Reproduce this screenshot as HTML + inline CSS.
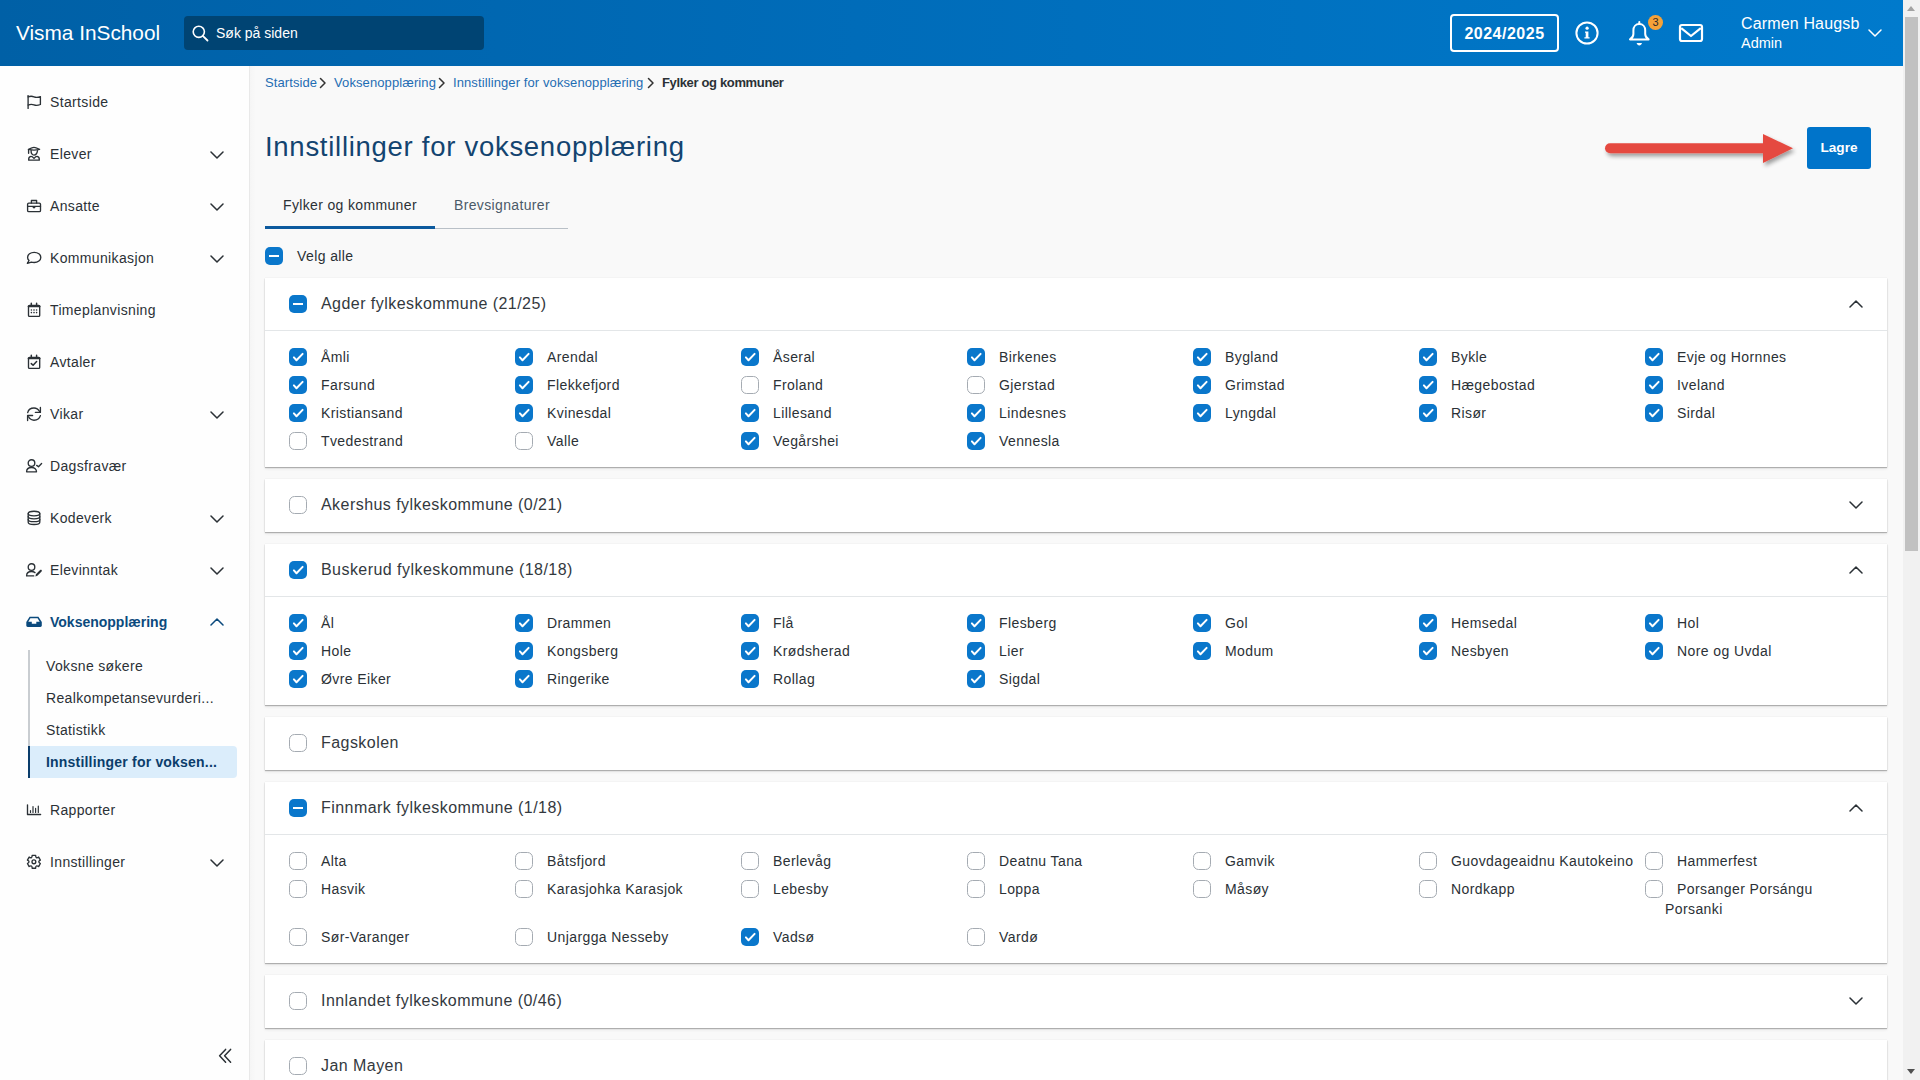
<!DOCTYPE html>
<html><head><meta charset="utf-8">
<style>
*{box-sizing:border-box;margin:0;padding:0}
html,body{width:1920px;height:1080px;overflow:hidden;background:#f9f9f9;font-family:"Liberation Sans",sans-serif;color:#2b3136}
#hdr{position:absolute;left:0;top:0;width:1903px;height:66px;background:linear-gradient(90deg,#0060a6 0%,#006cb9 45%,#007acc 100%)}
#brand{position:absolute;left:16px;top:20px;font-size:20.8px;color:#fff;line-height:26px;white-space:nowrap}
#search{position:absolute;left:184px;top:16px;width:300px;height:34px;background:#004473;border-radius:4px}
#search .t{position:absolute;left:32px;top:8px;font-size:14px;color:#fff;line-height:18px;white-space:nowrap}
#search svg{position:absolute;left:8px;top:9px}
#year{position:absolute;left:1450px;top:14px;width:109px;height:38px;border:2px solid #fff;border-radius:4px;color:#fff;font-weight:700;font-size:16px;letter-spacing:.5px;text-align:center;line-height:36px}
#user{position:absolute;left:1741px;top:14px;color:#fff;white-space:nowrap}
#user .n{font-size:16px;line-height:20px;letter-spacing:.15px}
#user .r{font-size:14.5px;line-height:19px}
#badge{position:absolute;left:1648px;top:15px;width:15px;height:15px;border-radius:50%;background:#f5a238;color:#2b2b2b;font-size:11px;line-height:15px;text-align:center}
#sb{position:absolute;left:0;top:66px;width:250px;height:1014px;background:#fefefe;border-right:1px solid #e9e9e9}
#sbsh{position:absolute;left:250px;top:66px;width:6px;height:1014px;background:linear-gradient(90deg,rgba(0,0,0,.015),rgba(0,0,0,0))}
#scroll{position:absolute;left:1903px;top:0;width:17px;height:1080px;background:#f1f1f1}
#thumb{position:absolute;left:1905px;top:17px;width:13px;height:534px;background:#c1c1c1}
.sarr{position:absolute;left:1907px;width:0;height:0;border-left:4.5px solid transparent;border-right:4.5px solid transparent}
.ic{position:absolute;left:22px}
.chev{position:absolute}
.sl{position:absolute;left:50px;font-size:14px;letter-spacing:.35px;line-height:20px;white-space:nowrap;color:#2b3136}
.sl.act{font-weight:700;letter-spacing:0;color:#0b4a7d}
#subline{position:absolute;left:28px;top:650px;width:2px;height:96px;background:#c9cdd1}
#subact{position:absolute;left:28px;top:746px;width:209px;height:32px;background:#dbedfb;border-left:2px solid #0b3d6b;border-radius:0 4px 4px 0}
.sub{position:absolute;left:46px;font-size:14px;letter-spacing:.35px;line-height:20px;white-space:nowrap;color:#2b3136}
.sub.act{font-weight:700;letter-spacing:.2px;color:#0b3d6b}
#bc{position:absolute;left:265px;top:74px;font-size:13px;line-height:18px;white-space:nowrap;color:#1f6db3;letter-spacing:.1px}
#bc span{position:absolute;top:0}
#title{position:absolute;left:265px;top:129px;font-size:27.5px;line-height:36px;color:#134470;white-space:nowrap;letter-spacing:.72px}
#lagre{position:absolute;left:1807px;top:127px;width:64px;height:42px;background:#0074ca;border-radius:3px;color:#fff;font-weight:700;font-size:13.6px;line-height:42px;text-align:center}
.tab{position:absolute;top:195px;font-size:14px;letter-spacing:.35px;line-height:20px;white-space:nowrap}
#tabline{position:absolute;left:435px;top:228px;width:133px;height:1px;background:#b9c0c7}
#tabact{position:absolute;left:265px;top:226px;width:170px;height:3px;background:#0c5a9e}
.cb{position:absolute;width:18px;height:18px;border-radius:5px}
.cb svg{position:absolute;left:0;top:0}
.cb.on{background:#0a77cb}
.cb.on i{position:absolute;left:4px;top:7.75px;width:10px;height:2.5px;background:#fff}
.cb.off{border:1px solid #a5abb2;background:#fff;border-radius:5.5px}
.lbl{position:absolute;font-size:14px;letter-spacing:.4px;line-height:20px;white-space:nowrap;color:#2b3136}
.wrap2{position:relative;left:-12px}
.panel{position:absolute;left:265px;width:1622px;background:#fff;box-shadow:0 1px 1px rgba(0,0,0,.24),0 2px 3px rgba(0,0,0,.07),0 0 1px rgba(0,0,0,.12)}
.ptitle{position:absolute;left:321px;font-size:16px;letter-spacing:.45px;line-height:22px;white-space:nowrap;color:#33393e}
.sep{position:absolute;left:265px;width:1622px;height:1px;background:#e3e6e8}
</style></head>
<body>
<div id="hdr">
  <div id="brand">Visma InSchool</div>
  <div id="search">
    <svg width="17" height="17" viewBox="0 0 17 17"><circle cx="6.8" cy="6.8" r="5.6" fill="none" stroke="#fff" stroke-width="1.6"/><line x1="10.8" y1="10.8" x2="15.5" y2="15.5" stroke="#fff" stroke-width="1.8" stroke-linecap="round"/></svg>
    <div class="t">Søk på siden</div>
  </div>
  <div id="year">2024/2025</div>
  
<svg style="position:absolute;left:1574px;top:20px" width="26" height="26" viewBox="0 0 26 26"><circle cx="13" cy="13" r="10.6" fill="none" stroke="#fff" stroke-width="2"/><circle cx="13.1" cy="8.2" r="1.6" fill="#fff"/><path d="M11 11.4H14.4V17.2H15.6V18.6H10.4V17.2H11.7V12.8H11Z" fill="#fff"/></svg>
<svg style="position:absolute;left:1626px;top:19px" width="28" height="30" viewBox="0 0 28 30"><path d="M13.3 5C9.7 5 7.4 7.7 7.4 11.3V15C7.4 17.4 5.8 19.2 4 20.4H22.6C20.8 19.2 19.2 17.4 19.2 15V11.3C19.2 7.7 16.9 5 13.3 5Z" fill="none" stroke="#fff" stroke-width="2" stroke-linejoin="round"/><path d="M13.3 3V5" stroke="#fff" stroke-width="2" stroke-linecap="round"/><path d="M10.6 24H16C15.6 25.6 14.6 26.5 13.3 26.5S11 25.6 10.6 24Z" fill="#fff"/></svg>
<div id="badge">3</div>
<svg style="position:absolute;left:1676px;top:21px" width="30" height="24" viewBox="0 0 30 24"><rect x="4" y="4" width="22" height="16" rx="2" fill="none" stroke="#fff" stroke-width="2.2"/><path d="M5.2 7.2L15 15L24.8 7.2" fill="none" stroke="#fff" stroke-width="2.2" stroke-linejoin="round"/></svg>
<svg class="chev" style="left:1868px;top:29px" width="14" height="8" viewBox="0 0 14 8"><path d="M1 1L7 7L13 1" fill="none" stroke="#fff" stroke-width="1.5" stroke-linecap="round" stroke-linejoin="round"/></svg>
  <div id="user"><div class="n">Carmen Haugsb</div><div class="r">Admin</div></div>
</div>
<div id="sb">
</div>
<div id="sbsh"></div>
<svg class="ic" style="top:91px" width="24" height="22" viewBox="0 0 24 22" fill="none" stroke="#2b3136" stroke-width="1.35" stroke-linecap="round" stroke-linejoin="round"><path d="M6.1 17.4V4.6"/><path d="M6.1 5.9C8.4 5 10 5 12 5.9S16 6.6 18.4 5.6V13.5C16 14.5 14 14.7 12 13.9S8.4 13.1 6.1 14.1"/></svg><div class="sl" style="top:92px">Startside</div><svg class="ic" style="top:144px" width="24" height="22" viewBox="0 0 24 22" fill="none" stroke="#2b3136" stroke-width="1.35" stroke-linecap="round" stroke-linejoin="round"><path d="M6.5 5.3C9 4.1 10.5 3.4 12 3.4S15 4.1 17.6 5.3C15 5.9 13.5 6.1 12 6.1S9 5.9 6.5 5.3Z"/><path d="M6.6 5.6V9.2"/><path d="M9.1 6.5C8.9 9.6 10.3 11.1 12 11.1S15.1 9.6 15.5 6.7"/><path d="M6.7 16.1C6.5 14 7.5 12.6 8.9 12.4C10 12.3 11.1 13.3 12 14.4C12.9 13.3 14 12.3 15.1 12.4C16.5 12.6 17.5 14 17.3 16.1Z"/></svg><div class="sl" style="top:144px">Elever</div><svg class="chev" style="left:210px;top:151px" width="14" height="8" viewBox="0 0 14 8"><path d="M1 1L7 7L13 1" fill="none" stroke="#2b3136" stroke-width="1.5" stroke-linecap="round" stroke-linejoin="round"/></svg><svg class="ic" style="top:196px" width="24" height="22" viewBox="0 0 24 22" fill="none" stroke="#2b3136" stroke-width="1.35" stroke-linecap="round" stroke-linejoin="round"><rect x="5.6" y="7.1" width="12.9" height="8.5" rx="1.2"/><path d="M9.4 7.1V4.5H14.6V7.1"/><path d="M5.6 10.3H18.5"/><path d="M10.4 10.4H13.6C13.5 11.7 12.8 12.4 12 12.4S10.5 11.7 10.4 10.4Z" fill="#2b3136" stroke="none"/></svg><div class="sl" style="top:196px">Ansatte</div><svg class="chev" style="left:210px;top:203px" width="14" height="8" viewBox="0 0 14 8"><path d="M1 1L7 7L13 1" fill="none" stroke="#2b3136" stroke-width="1.5" stroke-linecap="round" stroke-linejoin="round"/></svg><svg class="ic" style="top:248px" width="24" height="22" viewBox="0 0 24 22" fill="none" stroke="#2b3136" stroke-width="1.35" stroke-linecap="round" stroke-linejoin="round"><path d="M9.4 14.1C10.2 14.4 11.2 14.5 12.2 14.5C15.9 14.5 18.8 12.2 18.8 9.4S15.9 4.3 12.2 4.3S5.6 6.6 5.6 9.4C5.6 10.6 6.1 11.6 7 12.5L5.4 15.4Z"/></svg><div class="sl" style="top:248px">Kommunikasjon</div><svg class="chev" style="left:210px;top:255px" width="14" height="8" viewBox="0 0 14 8"><path d="M1 1L7 7L13 1" fill="none" stroke="#2b3136" stroke-width="1.5" stroke-linecap="round" stroke-linejoin="round"/></svg><svg class="ic" style="top:300px" width="24" height="22" viewBox="0 0 24 22" fill="none" stroke="#2b3136" stroke-width="1.35" stroke-linecap="round" stroke-linejoin="round"><rect x="6.5" y="5.4" width="11.2" height="11" rx="1"/><path d="M6.5 6.3H17.7" stroke-width="1.8"/><path d="M9.3 3.3V5.3M14.6 3.3V5.3" stroke-width="1.5"/><g fill="#2b3136" stroke="none"><circle cx="9.4" cy="10" r=".8"/><circle cx="12" cy="10" r=".8"/><circle cx="14.6" cy="10" r=".8"/><circle cx="9.4" cy="12.6" r=".8"/><circle cx="12" cy="12.6" r=".8"/><circle cx="14.6" cy="12.6" r=".8"/></g></svg><div class="sl" style="top:300px">Timeplanvisning</div><svg class="ic" style="top:352px" width="24" height="22" viewBox="0 0 24 22" fill="none" stroke="#2b3136" stroke-width="1.35" stroke-linecap="round" stroke-linejoin="round"><rect x="6.5" y="5.4" width="11.2" height="11" rx="1"/><path d="M6.5 6.3H17.7" stroke-width="1.8"/><path d="M9.3 3.3V5.3M14.6 3.3V5.3" stroke-width="1.5"/><path d="M9.3 11.6L11.1 13.3L14.6 9.6" stroke-width="1.5"/></svg><div class="sl" style="top:352px">Avtaler</div><svg class="ic" style="top:404px" width="24" height="22" viewBox="0 0 24 22" fill="none" stroke="#2b3136" stroke-width="1.35" stroke-linecap="round" stroke-linejoin="round"><path d="M5.7 8.6C6.4 5.8 8.9 4 12 4C14.3 4 16.3 5.2 17.6 7.5"/><path d="M18.4 3.4V8.4H13.4"/><path d="M18.4 11.6C17.6 14.3 15.1 16.2 12 16.2C9.7 16.2 7.7 15 6.5 12.8"/><path d="M5.6 16.5V11.5H10.6"/></svg><div class="sl" style="top:404px">Vikar</div><svg class="chev" style="left:210px;top:411px" width="14" height="8" viewBox="0 0 14 8"><path d="M1 1L7 7L13 1" fill="none" stroke="#2b3136" stroke-width="1.5" stroke-linecap="round" stroke-linejoin="round"/></svg><svg class="ic" style="top:456px" width="24" height="22" viewBox="0 0 24 22" fill="none" stroke="#2b3136" stroke-width="1.35" stroke-linecap="round" stroke-linejoin="round"><circle cx="9.5" cy="7" r="3.3"/><path d="M4.6 15.8C4.6 13.1 6.8 11.5 9.5 11.5S14.5 13.1 14.5 15.8Z"/><path d="M14.7 9.4L16.5 10.8L19.6 7.5"/></svg><div class="sl" style="top:456px">Dagsfravær</div><svg class="ic" style="top:508px" width="24" height="22" viewBox="0 0 24 22" fill="none" stroke="#2b3136" stroke-width="1.35" stroke-linecap="round" stroke-linejoin="round"><ellipse cx="12" cy="5.6" rx="5.8" ry="2.3"/><path d="M6.2 5.6V14.2C6.2 15.5 8.8 16.5 12 16.5S17.8 15.5 17.8 14.2V5.6"/><path d="M6.2 8.6C6.2 9.9 8.8 10.8 12 10.8S17.8 9.9 17.8 8.6"/><path d="M6.2 11.4C6.2 12.7 8.8 13.6 12 13.6S17.8 12.7 17.8 11.4"/></svg><div class="sl" style="top:508px">Kodeverk</div><svg class="chev" style="left:210px;top:515px" width="14" height="8" viewBox="0 0 14 8"><path d="M1 1L7 7L13 1" fill="none" stroke="#2b3136" stroke-width="1.5" stroke-linecap="round" stroke-linejoin="round"/></svg><svg class="ic" style="top:560px" width="24" height="22" viewBox="0 0 24 22" fill="none" stroke="#2b3136" stroke-width="1.35" stroke-linecap="round" stroke-linejoin="round"><circle cx="9.5" cy="7" r="3.3"/><path d="M11.7 15.9H4.6C4.6 13.1 6.8 11.5 9.5 11.5C10.9 11.5 12.1 11.9 13 12.6"/><path d="M13.4 16.4L13.9 14.3L18.1 10C18.5 9.6 19.2 9.6 19.6 10C20 10.4 20 11 19.6 11.4L15.4 15.8Z" fill="#2b3136" stroke="none"/></svg><div class="sl" style="top:560px">Elevinntak</div><svg class="chev" style="left:210px;top:567px" width="14" height="8" viewBox="0 0 14 8"><path d="M1 1L7 7L13 1" fill="none" stroke="#2b3136" stroke-width="1.5" stroke-linecap="round" stroke-linejoin="round"/></svg><svg class="ic" style="top:800px" width="24" height="22" viewBox="0 0 24 22" fill="none" stroke="#2b3136" stroke-width="1.35" stroke-linecap="round" stroke-linejoin="round"><path d="M5.5 4.8V14.5H18.6"/><path d="M8.5 10.6V12.5M11 6.6V12.5M13.6 8.4V12.5M16.3 6.1V12.5" stroke-width="1.2"/></svg><div class="sl" style="top:800px">Rapporter</div><svg class="ic" style="top:852px" width="24" height="22" viewBox="0 0 24 22" fill="none" stroke="#2b3136" stroke-width="1.35" stroke-linecap="round" stroke-linejoin="round"><path d="M10.17 3.33L13.63 3.33Q13.55 6.94 16.64 5.06L18.37 8.07Q15.20 9.80 18.37 11.53L16.64 14.54Q13.55 12.66 13.63 16.27L10.17 16.27Q10.25 12.66 7.16 14.54L5.43 11.53Q8.60 9.80 5.43 8.07L7.16 5.06Q10.25 6.94 10.17 3.33Z"/><circle cx="11.9" cy="9.8" r="1.9"/></svg><div class="sl" style="top:852px">Innstillinger</div><svg class="chev" style="left:210px;top:859px" width="14" height="8" viewBox="0 0 14 8"><path d="M1 1L7 7L13 1" fill="none" stroke="#2b3136" stroke-width="1.5" stroke-linecap="round" stroke-linejoin="round"/></svg><svg class="ic" style="top:612px" width="24" height="22" viewBox="0 0 24 22" fill="none" stroke="#2b3136" stroke-width="1.35" stroke-linecap="round" stroke-linejoin="round"><path d="M7.6 4.8H16.4L19.8 10V13.6C19.8 14.4 19.2 15 18.4 15H5.7C4.9 15 4.3 14.4 4.3 13.6V10Z" fill="#0b4a7d" stroke="none"/><path d="M8.4 6.2H15.6L17.7 9.8H14.3V11.8H9.8V9.8H6.3Z" fill="#fff" stroke="none"/></svg><div class="sl act" style="top:612px">Voksenopplæring</div><svg class="chev" style="left:210px;top:618px" width="14" height="8" viewBox="0 0 14 8"><path d="M1 7L7 1L13 7" fill="none" stroke="#0b4a7d" stroke-width="1.5" stroke-linecap="round" stroke-linejoin="round"/></svg><div id="subline"></div><div id="subact"></div><div class="sub" style="top:656px">Voksne søkere</div><div class="sub" style="top:688px">Realkompetansevurderi...</div><div class="sub" style="top:720px">Statistikk</div><div class="sub act" style="top:752px">Innstillinger for voksen...</div><svg style="position:absolute;left:214px;top:1045px" width="22" height="22" viewBox="0 0 22 22"><path d="M11.6 4.4L5.6 10.8L11.6 17.2M16.6 4.4L10.6 10.8L16.6 17.2" fill="none" stroke="#2b3136" stroke-width="1.5" stroke-linecap="round" stroke-linejoin="round"/></svg>
<div id="bc"><span style="left:0">Startside</span><span style="left:69px">Voksenopplæring</span><span style="left:188px">Innstillinger for voksenopplæring</span><span style="left:397px;color:#2b3136;font-weight:700;letter-spacing:-.35px">Fylker og kommuner</span></div>
<svg style="position:absolute;left:318px;top:77px" width="340" height="12" viewBox="0 0 340 12"><path d="M2.5 1.5L7 6L2.5 10.5M121.5 1.5L126 6L121.5 10.5M330.5 1.5L335 6L330.5 10.5" fill="none" stroke="#333" stroke-width="1.5" stroke-linecap="round" stroke-linejoin="round"/></svg>
<div id="title">Innstillinger for voksenopplæring</div>
<svg style="position:absolute;left:1598px;top:128px" width="200" height="42" viewBox="0 0 200 42"><defs><filter id="sh" x="-10%" y="-50%" width="120%" height="200%"><feGaussianBlur in="SourceAlpha" stdDeviation="2.2"/><feOffset dx="1.5" dy="2.5"/><feComponentTransfer><feFuncA type="linear" slope=".38"/></feComponentTransfer><feMerge><feMergeNode/><feMergeNode in="SourceGraphic"/></feMerge></filter></defs><g filter="url(#sh)"><path d="M12 20.3H170" stroke="#e54a40" stroke-width="10" stroke-linecap="round"/><path d="M165 6L195 20.3L165 35Z" fill="#e54a40"/></g></svg>
<div id="lagre">Lagre</div>
<div class="tab" style="left:283px;color:#2b3136">Fylker og kommuner</div>
<div class="tab" style="left:454px;color:#4b5a68">Brevsignaturer</div>
<div id="tabline"></div><div id="tabact"></div>
<div class="cb on" style="left:265px;top:247px"><i></i></div><div class="lbl" style="left:297px;top:246px">Velg alle</div><div class="panel" style="top:278px;height:189px"></div><div class="cb on" style="left:289px;top:295px"><i></i></div><div class="ptitle" style="top:293px">Agder fylkeskommune (21/25)</div><svg class="chev" style="left:1849px;top:300px" width="14" height="8" viewBox="0 0 14 8"><path d="M1 7L7 1L13 7" fill="none" stroke="#2b3136" stroke-width="1.5" stroke-linecap="round" stroke-linejoin="round"/></svg><div class="sep" style="top:330px"></div><div class="cb on" style="left:289px;top:348px"><svg width="18" height="18" viewBox="0 0 18 18"><path d="M4.9 9.4L7.5 12.2L13.6 5.9" fill="none" stroke="#fff" stroke-width="2" stroke-linecap="round" stroke-linejoin="round"/></svg></div><div class="lbl" style="left:321px;top:347px">Åmli</div><div class="cb on" style="left:515px;top:348px"><svg width="18" height="18" viewBox="0 0 18 18"><path d="M4.9 9.4L7.5 12.2L13.6 5.9" fill="none" stroke="#fff" stroke-width="2" stroke-linecap="round" stroke-linejoin="round"/></svg></div><div class="lbl" style="left:547px;top:347px">Arendal</div><div class="cb on" style="left:741px;top:348px"><svg width="18" height="18" viewBox="0 0 18 18"><path d="M4.9 9.4L7.5 12.2L13.6 5.9" fill="none" stroke="#fff" stroke-width="2" stroke-linecap="round" stroke-linejoin="round"/></svg></div><div class="lbl" style="left:773px;top:347px">Åseral</div><div class="cb on" style="left:967px;top:348px"><svg width="18" height="18" viewBox="0 0 18 18"><path d="M4.9 9.4L7.5 12.2L13.6 5.9" fill="none" stroke="#fff" stroke-width="2" stroke-linecap="round" stroke-linejoin="round"/></svg></div><div class="lbl" style="left:999px;top:347px">Birkenes</div><div class="cb on" style="left:1193px;top:348px"><svg width="18" height="18" viewBox="0 0 18 18"><path d="M4.9 9.4L7.5 12.2L13.6 5.9" fill="none" stroke="#fff" stroke-width="2" stroke-linecap="round" stroke-linejoin="round"/></svg></div><div class="lbl" style="left:1225px;top:347px">Bygland</div><div class="cb on" style="left:1419px;top:348px"><svg width="18" height="18" viewBox="0 0 18 18"><path d="M4.9 9.4L7.5 12.2L13.6 5.9" fill="none" stroke="#fff" stroke-width="2" stroke-linecap="round" stroke-linejoin="round"/></svg></div><div class="lbl" style="left:1451px;top:347px">Bykle</div><div class="cb on" style="left:1645px;top:348px"><svg width="18" height="18" viewBox="0 0 18 18"><path d="M4.9 9.4L7.5 12.2L13.6 5.9" fill="none" stroke="#fff" stroke-width="2" stroke-linecap="round" stroke-linejoin="round"/></svg></div><div class="lbl" style="left:1677px;top:347px">Evje og Hornnes</div><div class="cb on" style="left:289px;top:376px"><svg width="18" height="18" viewBox="0 0 18 18"><path d="M4.9 9.4L7.5 12.2L13.6 5.9" fill="none" stroke="#fff" stroke-width="2" stroke-linecap="round" stroke-linejoin="round"/></svg></div><div class="lbl" style="left:321px;top:375px">Farsund</div><div class="cb on" style="left:515px;top:376px"><svg width="18" height="18" viewBox="0 0 18 18"><path d="M4.9 9.4L7.5 12.2L13.6 5.9" fill="none" stroke="#fff" stroke-width="2" stroke-linecap="round" stroke-linejoin="round"/></svg></div><div class="lbl" style="left:547px;top:375px">Flekkefjord</div><div class="cb off" style="left:741px;top:376px"></div><div class="lbl" style="left:773px;top:375px">Froland</div><div class="cb off" style="left:967px;top:376px"></div><div class="lbl" style="left:999px;top:375px">Gjerstad</div><div class="cb on" style="left:1193px;top:376px"><svg width="18" height="18" viewBox="0 0 18 18"><path d="M4.9 9.4L7.5 12.2L13.6 5.9" fill="none" stroke="#fff" stroke-width="2" stroke-linecap="round" stroke-linejoin="round"/></svg></div><div class="lbl" style="left:1225px;top:375px">Grimstad</div><div class="cb on" style="left:1419px;top:376px"><svg width="18" height="18" viewBox="0 0 18 18"><path d="M4.9 9.4L7.5 12.2L13.6 5.9" fill="none" stroke="#fff" stroke-width="2" stroke-linecap="round" stroke-linejoin="round"/></svg></div><div class="lbl" style="left:1451px;top:375px">Hægebostad</div><div class="cb on" style="left:1645px;top:376px"><svg width="18" height="18" viewBox="0 0 18 18"><path d="M4.9 9.4L7.5 12.2L13.6 5.9" fill="none" stroke="#fff" stroke-width="2" stroke-linecap="round" stroke-linejoin="round"/></svg></div><div class="lbl" style="left:1677px;top:375px">Iveland</div><div class="cb on" style="left:289px;top:404px"><svg width="18" height="18" viewBox="0 0 18 18"><path d="M4.9 9.4L7.5 12.2L13.6 5.9" fill="none" stroke="#fff" stroke-width="2" stroke-linecap="round" stroke-linejoin="round"/></svg></div><div class="lbl" style="left:321px;top:403px">Kristiansand</div><div class="cb on" style="left:515px;top:404px"><svg width="18" height="18" viewBox="0 0 18 18"><path d="M4.9 9.4L7.5 12.2L13.6 5.9" fill="none" stroke="#fff" stroke-width="2" stroke-linecap="round" stroke-linejoin="round"/></svg></div><div class="lbl" style="left:547px;top:403px">Kvinesdal</div><div class="cb on" style="left:741px;top:404px"><svg width="18" height="18" viewBox="0 0 18 18"><path d="M4.9 9.4L7.5 12.2L13.6 5.9" fill="none" stroke="#fff" stroke-width="2" stroke-linecap="round" stroke-linejoin="round"/></svg></div><div class="lbl" style="left:773px;top:403px">Lillesand</div><div class="cb on" style="left:967px;top:404px"><svg width="18" height="18" viewBox="0 0 18 18"><path d="M4.9 9.4L7.5 12.2L13.6 5.9" fill="none" stroke="#fff" stroke-width="2" stroke-linecap="round" stroke-linejoin="round"/></svg></div><div class="lbl" style="left:999px;top:403px">Lindesnes</div><div class="cb on" style="left:1193px;top:404px"><svg width="18" height="18" viewBox="0 0 18 18"><path d="M4.9 9.4L7.5 12.2L13.6 5.9" fill="none" stroke="#fff" stroke-width="2" stroke-linecap="round" stroke-linejoin="round"/></svg></div><div class="lbl" style="left:1225px;top:403px">Lyngdal</div><div class="cb on" style="left:1419px;top:404px"><svg width="18" height="18" viewBox="0 0 18 18"><path d="M4.9 9.4L7.5 12.2L13.6 5.9" fill="none" stroke="#fff" stroke-width="2" stroke-linecap="round" stroke-linejoin="round"/></svg></div><div class="lbl" style="left:1451px;top:403px">Risør</div><div class="cb on" style="left:1645px;top:404px"><svg width="18" height="18" viewBox="0 0 18 18"><path d="M4.9 9.4L7.5 12.2L13.6 5.9" fill="none" stroke="#fff" stroke-width="2" stroke-linecap="round" stroke-linejoin="round"/></svg></div><div class="lbl" style="left:1677px;top:403px">Sirdal</div><div class="cb off" style="left:289px;top:432px"></div><div class="lbl" style="left:321px;top:431px">Tvedestrand</div><div class="cb off" style="left:515px;top:432px"></div><div class="lbl" style="left:547px;top:431px">Valle</div><div class="cb on" style="left:741px;top:432px"><svg width="18" height="18" viewBox="0 0 18 18"><path d="M4.9 9.4L7.5 12.2L13.6 5.9" fill="none" stroke="#fff" stroke-width="2" stroke-linecap="round" stroke-linejoin="round"/></svg></div><div class="lbl" style="left:773px;top:431px">Vegårshei</div><div class="cb on" style="left:967px;top:432px"><svg width="18" height="18" viewBox="0 0 18 18"><path d="M4.9 9.4L7.5 12.2L13.6 5.9" fill="none" stroke="#fff" stroke-width="2" stroke-linecap="round" stroke-linejoin="round"/></svg></div><div class="lbl" style="left:999px;top:431px">Vennesla</div><div class="panel" style="top:479px;height:53px"></div><div class="cb off" style="left:289px;top:496px"></div><div class="ptitle" style="top:494px">Akershus fylkeskommune (0/21)</div><svg class="chev" style="left:1849px;top:501px" width="14" height="8" viewBox="0 0 14 8"><path d="M1 1L7 7L13 1" fill="none" stroke="#2b3136" stroke-width="1.5" stroke-linecap="round" stroke-linejoin="round"/></svg><div class="panel" style="top:544px;height:161px"></div><div class="cb on" style="left:289px;top:561px"><svg width="18" height="18" viewBox="0 0 18 18"><path d="M4.9 9.4L7.5 12.2L13.6 5.9" fill="none" stroke="#fff" stroke-width="2" stroke-linecap="round" stroke-linejoin="round"/></svg></div><div class="ptitle" style="top:559px">Buskerud fylkeskommune (18/18)</div><svg class="chev" style="left:1849px;top:566px" width="14" height="8" viewBox="0 0 14 8"><path d="M1 7L7 1L13 7" fill="none" stroke="#2b3136" stroke-width="1.5" stroke-linecap="round" stroke-linejoin="round"/></svg><div class="sep" style="top:596px"></div><div class="cb on" style="left:289px;top:614px"><svg width="18" height="18" viewBox="0 0 18 18"><path d="M4.9 9.4L7.5 12.2L13.6 5.9" fill="none" stroke="#fff" stroke-width="2" stroke-linecap="round" stroke-linejoin="round"/></svg></div><div class="lbl" style="left:321px;top:613px">Ål</div><div class="cb on" style="left:515px;top:614px"><svg width="18" height="18" viewBox="0 0 18 18"><path d="M4.9 9.4L7.5 12.2L13.6 5.9" fill="none" stroke="#fff" stroke-width="2" stroke-linecap="round" stroke-linejoin="round"/></svg></div><div class="lbl" style="left:547px;top:613px">Drammen</div><div class="cb on" style="left:741px;top:614px"><svg width="18" height="18" viewBox="0 0 18 18"><path d="M4.9 9.4L7.5 12.2L13.6 5.9" fill="none" stroke="#fff" stroke-width="2" stroke-linecap="round" stroke-linejoin="round"/></svg></div><div class="lbl" style="left:773px;top:613px">Flå</div><div class="cb on" style="left:967px;top:614px"><svg width="18" height="18" viewBox="0 0 18 18"><path d="M4.9 9.4L7.5 12.2L13.6 5.9" fill="none" stroke="#fff" stroke-width="2" stroke-linecap="round" stroke-linejoin="round"/></svg></div><div class="lbl" style="left:999px;top:613px">Flesberg</div><div class="cb on" style="left:1193px;top:614px"><svg width="18" height="18" viewBox="0 0 18 18"><path d="M4.9 9.4L7.5 12.2L13.6 5.9" fill="none" stroke="#fff" stroke-width="2" stroke-linecap="round" stroke-linejoin="round"/></svg></div><div class="lbl" style="left:1225px;top:613px">Gol</div><div class="cb on" style="left:1419px;top:614px"><svg width="18" height="18" viewBox="0 0 18 18"><path d="M4.9 9.4L7.5 12.2L13.6 5.9" fill="none" stroke="#fff" stroke-width="2" stroke-linecap="round" stroke-linejoin="round"/></svg></div><div class="lbl" style="left:1451px;top:613px">Hemsedal</div><div class="cb on" style="left:1645px;top:614px"><svg width="18" height="18" viewBox="0 0 18 18"><path d="M4.9 9.4L7.5 12.2L13.6 5.9" fill="none" stroke="#fff" stroke-width="2" stroke-linecap="round" stroke-linejoin="round"/></svg></div><div class="lbl" style="left:1677px;top:613px">Hol</div><div class="cb on" style="left:289px;top:642px"><svg width="18" height="18" viewBox="0 0 18 18"><path d="M4.9 9.4L7.5 12.2L13.6 5.9" fill="none" stroke="#fff" stroke-width="2" stroke-linecap="round" stroke-linejoin="round"/></svg></div><div class="lbl" style="left:321px;top:641px">Hole</div><div class="cb on" style="left:515px;top:642px"><svg width="18" height="18" viewBox="0 0 18 18"><path d="M4.9 9.4L7.5 12.2L13.6 5.9" fill="none" stroke="#fff" stroke-width="2" stroke-linecap="round" stroke-linejoin="round"/></svg></div><div class="lbl" style="left:547px;top:641px">Kongsberg</div><div class="cb on" style="left:741px;top:642px"><svg width="18" height="18" viewBox="0 0 18 18"><path d="M4.9 9.4L7.5 12.2L13.6 5.9" fill="none" stroke="#fff" stroke-width="2" stroke-linecap="round" stroke-linejoin="round"/></svg></div><div class="lbl" style="left:773px;top:641px">Krødsherad</div><div class="cb on" style="left:967px;top:642px"><svg width="18" height="18" viewBox="0 0 18 18"><path d="M4.9 9.4L7.5 12.2L13.6 5.9" fill="none" stroke="#fff" stroke-width="2" stroke-linecap="round" stroke-linejoin="round"/></svg></div><div class="lbl" style="left:999px;top:641px">Lier</div><div class="cb on" style="left:1193px;top:642px"><svg width="18" height="18" viewBox="0 0 18 18"><path d="M4.9 9.4L7.5 12.2L13.6 5.9" fill="none" stroke="#fff" stroke-width="2" stroke-linecap="round" stroke-linejoin="round"/></svg></div><div class="lbl" style="left:1225px;top:641px">Modum</div><div class="cb on" style="left:1419px;top:642px"><svg width="18" height="18" viewBox="0 0 18 18"><path d="M4.9 9.4L7.5 12.2L13.6 5.9" fill="none" stroke="#fff" stroke-width="2" stroke-linecap="round" stroke-linejoin="round"/></svg></div><div class="lbl" style="left:1451px;top:641px">Nesbyen</div><div class="cb on" style="left:1645px;top:642px"><svg width="18" height="18" viewBox="0 0 18 18"><path d="M4.9 9.4L7.5 12.2L13.6 5.9" fill="none" stroke="#fff" stroke-width="2" stroke-linecap="round" stroke-linejoin="round"/></svg></div><div class="lbl" style="left:1677px;top:641px">Nore og Uvdal</div><div class="cb on" style="left:289px;top:670px"><svg width="18" height="18" viewBox="0 0 18 18"><path d="M4.9 9.4L7.5 12.2L13.6 5.9" fill="none" stroke="#fff" stroke-width="2" stroke-linecap="round" stroke-linejoin="round"/></svg></div><div class="lbl" style="left:321px;top:669px">Øvre Eiker</div><div class="cb on" style="left:515px;top:670px"><svg width="18" height="18" viewBox="0 0 18 18"><path d="M4.9 9.4L7.5 12.2L13.6 5.9" fill="none" stroke="#fff" stroke-width="2" stroke-linecap="round" stroke-linejoin="round"/></svg></div><div class="lbl" style="left:547px;top:669px">Ringerike</div><div class="cb on" style="left:741px;top:670px"><svg width="18" height="18" viewBox="0 0 18 18"><path d="M4.9 9.4L7.5 12.2L13.6 5.9" fill="none" stroke="#fff" stroke-width="2" stroke-linecap="round" stroke-linejoin="round"/></svg></div><div class="lbl" style="left:773px;top:669px">Rollag</div><div class="cb on" style="left:967px;top:670px"><svg width="18" height="18" viewBox="0 0 18 18"><path d="M4.9 9.4L7.5 12.2L13.6 5.9" fill="none" stroke="#fff" stroke-width="2" stroke-linecap="round" stroke-linejoin="round"/></svg></div><div class="lbl" style="left:999px;top:669px">Sigdal</div><div class="panel" style="top:717px;height:53px"></div><div class="cb off" style="left:289px;top:734px"></div><div class="ptitle" style="top:732px">Fagskolen</div><div class="panel" style="top:782px;height:181px"></div><div class="cb on" style="left:289px;top:799px"><i></i></div><div class="ptitle" style="top:797px">Finnmark fylkeskommune (1/18)</div><svg class="chev" style="left:1849px;top:804px" width="14" height="8" viewBox="0 0 14 8"><path d="M1 7L7 1L13 7" fill="none" stroke="#2b3136" stroke-width="1.5" stroke-linecap="round" stroke-linejoin="round"/></svg><div class="sep" style="top:834px"></div><div class="cb off" style="left:289px;top:852px"></div><div class="lbl" style="left:321px;top:851px">Alta</div><div class="cb off" style="left:515px;top:852px"></div><div class="lbl" style="left:547px;top:851px">Båtsfjord</div><div class="cb off" style="left:741px;top:852px"></div><div class="lbl" style="left:773px;top:851px">Berlevåg</div><div class="cb off" style="left:967px;top:852px"></div><div class="lbl" style="left:999px;top:851px">Deatnu Tana</div><div class="cb off" style="left:1193px;top:852px"></div><div class="lbl" style="left:1225px;top:851px">Gamvik</div><div class="cb off" style="left:1419px;top:852px"></div><div class="lbl" style="left:1451px;top:851px">Guovdageaidnu Kautokeino</div><div class="cb off" style="left:1645px;top:852px"></div><div class="lbl" style="left:1677px;top:851px">Hammerfest</div><div class="cb off" style="left:289px;top:880px"></div><div class="lbl" style="left:321px;top:879px">Hasvik</div><div class="cb off" style="left:515px;top:880px"></div><div class="lbl" style="left:547px;top:879px">Karasjohka Karasjok</div><div class="cb off" style="left:741px;top:880px"></div><div class="lbl" style="left:773px;top:879px">Lebesby</div><div class="cb off" style="left:967px;top:880px"></div><div class="lbl" style="left:999px;top:879px">Loppa</div><div class="cb off" style="left:1193px;top:880px"></div><div class="lbl" style="left:1225px;top:879px">Måsøy</div><div class="cb off" style="left:1419px;top:880px"></div><div class="lbl" style="left:1451px;top:879px">Nordkapp</div><div class="cb off" style="left:1645px;top:880px"></div><div class="lbl" style="left:1677px;top:879px">Porsanger Porsángu<br><span class="wrap2">Porsanki</span></div><div class="cb off" style="left:289px;top:928px"></div><div class="lbl" style="left:321px;top:927px">Sør-Varanger</div><div class="cb off" style="left:515px;top:928px"></div><div class="lbl" style="left:547px;top:927px">Unjargga Nesseby</div><div class="cb on" style="left:741px;top:928px"><svg width="18" height="18" viewBox="0 0 18 18"><path d="M4.9 9.4L7.5 12.2L13.6 5.9" fill="none" stroke="#fff" stroke-width="2" stroke-linecap="round" stroke-linejoin="round"/></svg></div><div class="lbl" style="left:773px;top:927px">Vadsø</div><div class="cb off" style="left:967px;top:928px"></div><div class="lbl" style="left:999px;top:927px">Vardø</div><div class="panel" style="top:975px;height:53px"></div><div class="cb off" style="left:289px;top:992px"></div><div class="ptitle" style="top:990px">Innlandet fylkeskommune (0/46)</div><svg class="chev" style="left:1849px;top:997px" width="14" height="8" viewBox="0 0 14 8"><path d="M1 1L7 7L13 1" fill="none" stroke="#2b3136" stroke-width="1.5" stroke-linecap="round" stroke-linejoin="round"/></svg><div class="panel" style="top:1040px;height:52px"></div><div class="cb off" style="left:289px;top:1057px"></div><div class="ptitle" style="top:1055px">Jan Mayen</div>
<div id="scroll"></div>
<div id="thumb"></div>
<div class="sarr" style="top:6px;border-bottom:5px solid #a3a3a3"></div>
<div class="sarr" style="top:1069px;border-top:5px solid #505050"></div>
</body></html>
